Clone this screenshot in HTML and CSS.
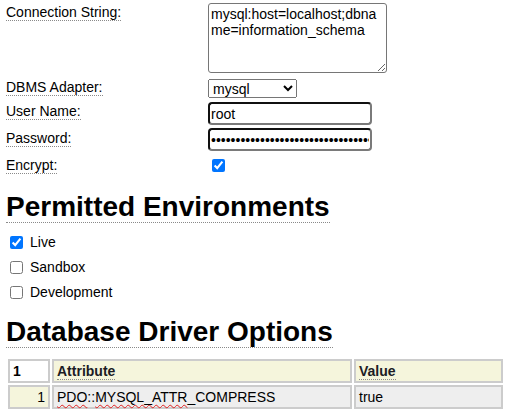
FILE: index.html
```html
<!DOCTYPE html>
<html>
<head>
<meta charset="utf-8">
<link rel="stylesheet" href="styles.css">
</head>
<body>
<div class="page">
  <div class="form">
    <div class="row row-conn">
      <span class="lbl"><span class="u">Connection String:</span></span>
      <textarea class="ta" spellcheck="false">mysql:host=localhost;dbname=information_schema</textarea>
    </div>
    <div class="row row-dbms">
      <span class="lbl"><span class="u">DBMS Adapter:</span></span>
      <select class="sel"><option>mysql</option></select>
    </div>
    <div class="row row-user">
      <span class="lbl"><span class="u">User Name:</span></span>
      <input class="txt" type="text" value="root">
    </div>
    <div class="row row-pass">
      <span class="lbl"><span class="u">Password:</span></span>
      <input class="txt" type="password" value="passwordpasswordpasswordpasswordpassword">
    </div>
    <div class="row row-enc">
      <span class="lbl"><span class="u">Encrypt:</span></span>
      <input class="cb-enc" type="checkbox" checked>
    </div>
  </div>

  <h1 class="heading heading-env"><span class="hu">Permitted Environments</span></h1>
  <ul class="envs">
    <li class="env"><input class="cb" type="checkbox" checked><span>Live</span></li>
    <li class="env"><input class="cb" type="checkbox"><span>Sandbox</span></li>
    <li class="env"><input class="cb" type="checkbox"><span>Development</span></li>
  </ul>

  <h1 class="heading heading-db"><span class="hu">Database Driver Options</span></h1>
  <table class="opts">
    <thead>
      <tr>
        <th class="c-num c-plain">1</th>
        <th class="c-attr"><span class="hdr">Attribute</span></th>
        <th class="c-val"><span class="hdr">Value</span></th>
      </tr>
    </thead>
    <tbody>
      <tr>
        <td class="c-idx">1</td>
        <td class="c-cell"><span class="sp">PDO</span>::<span class="sp">MYSQL_ATTR</span>_COMPRESS</td>
        <td class="c-cell">true</td>
      </tr>
    </tbody>
  </table>
</div>
</body>
</html>
```

FILE: styles.css
```css
html, body {
  margin: 0;
  padding: 0;
  background: #fff;
}

body {
  font-family: "Liberation Sans", Arial, sans-serif;
  font-size: 14px;
  color: #000;
}

.page {
  padding: 0 4px 0 6px;
}

/* ---------- form ---------- */
.row {
  display: grid;
  grid-template-columns: 202px auto;
  align-items: start;
}

.lbl {
  line-height: 16px;
}

.u {
  border-bottom: 1px dotted #8a8a8a;
}

.row-conn { margin-top: 3px; }
.row-conn .lbl { padding-top: 1px; }

.row-dbms { margin-top: 6px; }

.row-user { margin-top: 4px; }
.row-user .lbl { padding-top: 1px; }

.row-pass { margin-top: 3px; }
.row-pass .lbl { padding-top: 2px; }

.row-enc { margin-top: 6px; }

.ta {
  box-sizing: border-box;
  width: 179px;
  height: 70px;
  margin: 0;
  padding: 2px;
  border: 1px solid #767676;
  border-radius: 3px;
  font-family: "Liberation Sans", Arial, sans-serif;
  font-size: 14px;
  line-height: 16px;
  color: #000;
}

.sel {
  box-sizing: border-box;
  width: 89px;
  height: 19px;
  margin: 0;
  font-family: "Liberation Sans", Arial, sans-serif;
  font-size: 14px;
  color: #000;
}

.txt {
  box-sizing: border-box;
  width: 164px;
  height: 23px;
  margin: 0;
  padding: 1px 1px;
  border: 2px solid;
  border-color: #101010 #7a7a7a #7a7a7a #101010;
  border-radius: 4px;
  font-family: "Liberation Sans", Arial, sans-serif;
  font-size: 14px;
  color: #000;
  outline: none;
}

.cb-enc {
  width: 13px;
  height: 13px;
  margin: 2px 0 0 4px;
}

/* ---------- headings ---------- */
.heading {
  margin: 0;
  font-size: 28px;
  font-weight: bold;
  line-height: 31px;
}

.hu {
  display: inline-block;
  border-bottom: 1px dotted #8a8a8a;
}

.heading-env { margin-top: 18px; }
.heading-db { margin-top: 11px; }

/* ---------- environments ---------- */
.envs {
  list-style: none;
  margin: 7px 0 0;
  padding: 0;
}

.env {
  display: flex;
  align-items: center;
  height: 25px;
  line-height: 16px;
}

.env span {
  position: relative;
  top: -1px;
}

.cb {
  width: 13px;
  height: 13px;
  margin: 0 7px 0 4px;
}

/* ---------- table ---------- */
.opts {
  margin-top: 9px;
  width: 499px;
  table-layout: fixed;
  border-collapse: separate;
  border-spacing: 2px;
}

.opts th,
.opts td {
  box-sizing: border-box;
  height: 24px;
  padding: 2px 3px;
  border: 2px solid #cccccc;
  line-height: 16px;
  font-size: 14px;
  text-align: left;
  vertical-align: middle;
}

.opts th {
  font-weight: bold;
  color: #1c1c24;
  background: #f5f5dc;
}

.c-num { width: 42px; }
.c-attr { width: 300px; }
.c-val { width: 149px; }

.opts th.c-plain {
  background: #fff;
  color: #000;
}

.hdr {
  border-bottom: 1px dotted #8a8a8a;
}

.opts td.c-idx {
  background: #f5f5dc;
  text-align: right;
}

.opts td.c-cell {
  background: #eeeeee;
}

.sp {
  text-decoration: underline wavy #e02020;
  text-decoration-thickness: 1px;
  text-underline-offset: 2px;
  text-decoration-skip-ink: none;
}
```
